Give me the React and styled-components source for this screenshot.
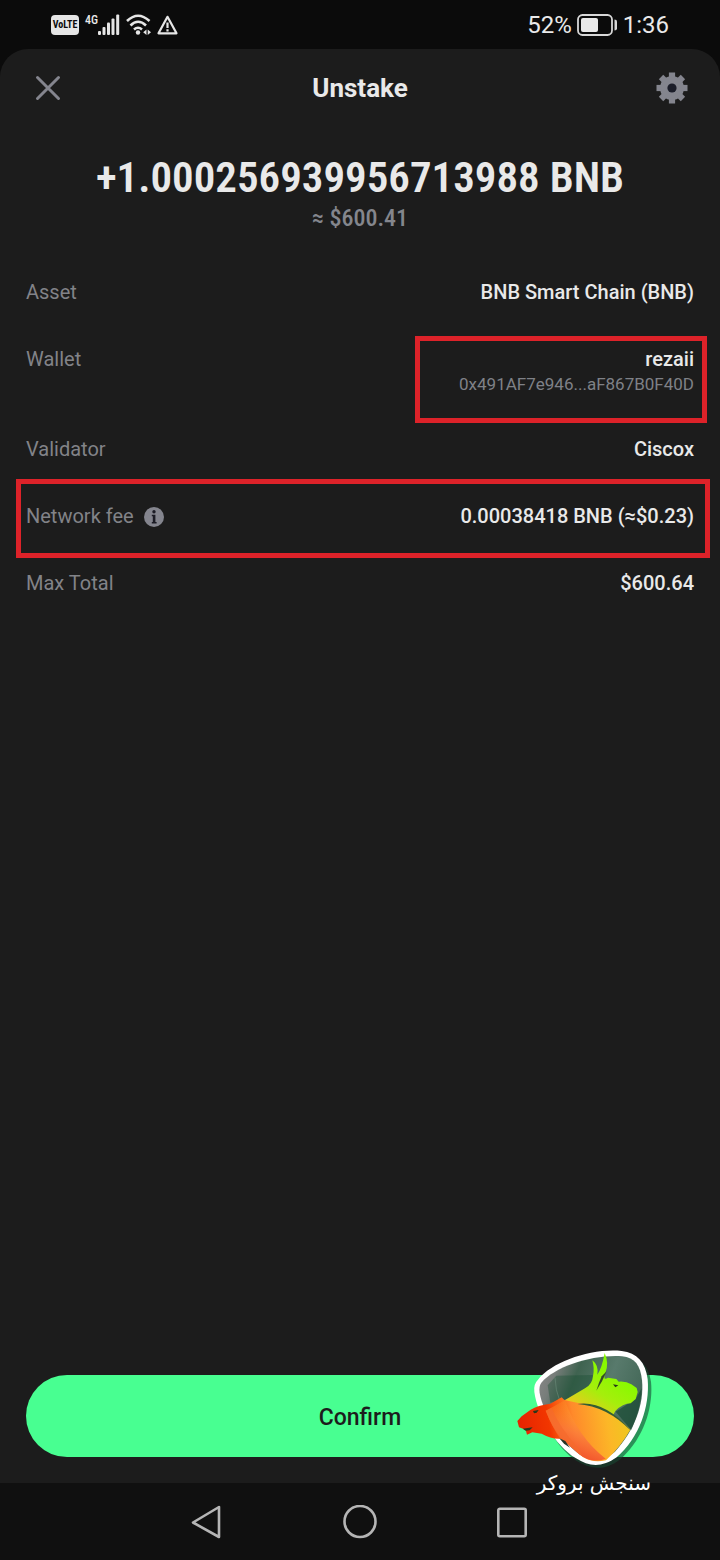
import React from "react";
import styled, { createGlobalStyle } from "styled-components";

const GlobalStyle = createGlobalStyle`
  * { box-sizing: border-box; }
  html { background: #0b0b0b; }
  body { margin: 0; font-family: Roboto, "Liberation Sans", sans-serif; color: #e9e9e9; }
`;

const narrow = `"Liberation Sans Narrow", "Roboto Condensed", Roboto, sans-serif`;

const Screen = styled.div`
  display: flex;
  flex-direction: column;
  min-height: 100vh;
  background: #0b0b0b;
`;

const StatusBar = styled.div`
  display: flex;
  align-items: center;
  justify-content: space-between;
  height: 49px;
  padding: 0 51px;
`;

const StatusGroup = styled.div`
  display: flex;
  align-items: center;
  gap: ${(p) => p.$gap}px;
`;

const VolteBadge = styled.span`
  width: 28px;
  height: 20px;
  border-radius: 4px;
  background: #e6e6e6;
  color: #0b0b0b;
  font: 700 10px/20px ${narrow};
  text-align: center;
`;

const SignalGroup = styled.span`
  display: flex;
  align-items: center;
`;

const NetworkType = styled.span`
  align-self: flex-start;
  font: 500 12px/12px ${narrow};
`;

const StatusText = styled.span`
  font-size: 24px;
  line-height: 28px;
`;

const Sheet = styled.main`
  position: relative;
  display: flex;
  flex: 1;
  flex-direction: column;
  padding: 0 26px 26px;
  border-radius: 28px 28px 0 0;
  background: #1c1c1c;
`;

const Header = styled.header`
  display: flex;
  align-items: center;
  justify-content: space-between;
  height: 78px;
  padding: 0 5px;
`;

const IconButton = styled.button`
  display: grid;
  place-items: center;
  width: 34px;
  height: 34px;
  padding: 0;
  border: 0;
  background: none;
  color: #84858e;
`;

const Title = styled.h1`
  margin: 0;
  font: 700 26px/32px Roboto, sans-serif;
`;

const Summary = styled.section`
  display: flex;
  flex-direction: column;
  align-items: center;
  gap: 3px;
  padding: 26px 0 27px;
`;

const Amount = styled.div`
  font: 600 43px/48px ${narrow};
  white-space: nowrap;
`;

const FiatAmount = styled.div`
  color: #84868d;
  font: 500 24px/28px ${narrow};
`;

const Details = styled.dl`
  margin: 0;
`;

const Row = styled.div`
  position: relative;
  display: flex;
  align-items: flex-start;
  justify-content: space-between;
  padding: 20px 0;
  font-size: 20px;
  line-height: 27px;
`;

const Label = styled.dt`
  display: flex;
  align-items: center;
  gap: 10px;
  color: #828388;
`;

const Value = styled.dd`
  margin: 0;
  font-weight: 500;
  text-align: right;
`;

const Address = styled.div`
  color: #7f8187;
  font-size: 17px;
  font-weight: 400;
  line-height: 23px;
`;

const Highlight = styled.span`
  position: absolute;
  border: 5px solid #dd2229;
  pointer-events: none;
`;

const WalletHighlight = styled(Highlight)`
  inset: 10px -13px -7px auto;
  width: 292px;
`;

const FeeHighlight = styled(Highlight)`
  inset: -4px -16px -8px -10px;
`;

const ConfirmButton = styled.button`
  height: 82px;
  margin-top: auto;
  padding: 4px 0 0;
  border: 0;
  border-radius: 41px;
  background: #48ff91;
  color: #1c1c1c;
  font: 500 23px/28px Roboto, sans-serif;
`;

const Watermark = styled.div`
  position: absolute;
  right: 65px;
  bottom: -14px;
  display: flex;
  flex-direction: column;
  width: 140px;
`;

const WatermarkName = styled.span`
  padding-right: 4px;
  color: #fff;
  font: 400 20px/28px "DejaVu Sans", sans-serif;
  white-space: nowrap;
`;

const NavBar = styled.nav`
  display: flex;
  align-items: center;
  justify-content: center;
  gap: 118px;
  height: 77px;
  background: #101010;
`;

const NavButton = styled(IconButton)`
  color: #b5b5b5;
`;

const SignalIcon = () => (
  <svg width="22" height="22" viewBox="0 0 22 22" fill="#e6e6e6" aria-hidden="true">
    <rect x="0" y="17" width="3" height="4" rx="1" />
    <rect x="4.5" y="13" width="3" height="8" rx="1" />
    <rect x="9" y="8.5" width="3" height="12.5" rx="1" />
    <rect x="13.5" y="4.5" width="3" height="16.5" rx="1" />
    <rect x="18.2" y="0.5" width="3" height="20.5" rx="1" />
  </svg>
);

const WifiIcon = () => (
  <svg width="25" height="22" viewBox="0 0 25 22" fill="none" stroke="#e6e6e6" strokeWidth="2.6" aria-hidden="true">
    <path d="M1 7Q12 -3.5 23.5 7M4.5 11.5Q12 4 20 11.5M8 15.500Q12 12 16 15.500" />
    <circle cx="12" cy="18.5" r="2.2" fill="#e6e6e6" stroke="none" />
    <path d="M20.500 15.500v5.500l-3.300-2.700zM21.700 15.500v5.500l3.300-2.700z" fill="#e6e6e6" stroke="none" />
  </svg>
);

const WarningIcon = () => (
  <svg width="21" height="20" viewBox="0 0 21 20" fill="none" stroke="#e6e6e6" strokeWidth="2.2" strokeLinejoin="round" aria-hidden="true">
    <path d="M10.500 1.800L19.500 18.300H1.500z" />
    <path d="M10.500 7.500v5.500M10.500 14.200v2.200" />
  </svg>
);

const BatteryIcon = () => (
  <svg width="41" height="22" viewBox="0 0 41 22" aria-hidden="true">
    <rect x="1" y="1" width="34" height="20" rx="4.5" fill="none" stroke="#d8d8d8" strokeWidth="1.8" />
    <rect x="4" y="4" width="17" height="14" rx="2" fill="#e9e9e9" />
    <path d="M37.500 5.500q2.500 0 2.500 2v7q0 2-2.500 2z" fill="#d8d8d8" />
  </svg>
);

const CloseIcon = () => (
  <svg width="26" height="26" viewBox="0 0 26 26" stroke="currentColor" strokeWidth="3" strokeLinecap="round" aria-hidden="true">
    <path d="M2.500 2.500l21 21M23.500 2.500l-21 21" />
  </svg>
);

const GearIcon = () => (
  <svg width="32" height="32" viewBox="-16 -16 32 32" fill="currentColor" aria-hidden="true">
    {[0, 45, 90, 135].map((angle) => (
      <rect key={angle} x="-3.1" y="-15.500" width="6.200" height="31" transform={`rotate(${angle})`} />
    ))}
    <circle r="12" />
    <circle r="4.6" fill="#1b1d29" />
  </svg>
);

const InfoIcon = () => (
  <svg width="20" height="20" viewBox="0 0 20 20" fill="none" aria-hidden="true">
    <circle cx="10" cy="10" r="10" fill="#84858e" />
    <circle cx="10" cy="4.800" r="1.700" fill="#1c1c25" />
    <path d="M7.800 7.800h3.600v7.200h1.200v1.500H7.800v-1.500h1V9.300h-1z" fill="#1c1c25" />
  </svg>
);

const ShieldLogo = () => (
  <svg width="140" height="122" viewBox="45 36 420 366" aria-hidden="true">
    <defs>
      <linearGradient id="glass" x1="0" y1="0.2" x2="1" y2="0.6">
        <stop offset="0" stopColor="#858585" />
        <stop offset="0.12" stopColor="#777d7a" />
        <stop offset="0.3" stopColor="#3f6350" />
        <stop offset="0.6" stopColor="#587a6c" />
        <stop offset="1" stopColor="#3e6352" />
      </linearGradient>
      <linearGradient id="bull" gradientUnits="userSpaceOnUse" x1="365" y1="130" x2="220" y2="350">
        <stop offset="0" stopColor="#88fa00" />
        <stop offset="0.28" stopColor="#a6ee0c" />
        <stop offset="0.6" stopColor="#f5c322" />
        <stop offset="1" stopColor="#fa582c" />
      </linearGradient>
      <linearGradient id="body" gradientUnits="userSpaceOnUse" x1="60" y1="290" x2="385" y2="235">
        <stop offset="0" stopColor="#e62300" />
        <stop offset="0.27" stopColor="#f23600" />
        <stop offset="0.5" stopColor="#ff8a2b" />
        <stop offset="0.8" stopColor="#fcb727" />
        <stop offset="1" stopColor="#eec81f" />
      </linearGradient>
      <linearGradient id="chest" gradientUnits="userSpaceOnUse" x1="225" y1="375" x2="285" y2="215">
        <stop offset="0" stopColor="#f04a2a" />
        <stop offset="0.45" stopColor="#fb7c3c" stopOpacity="0.8" />
        <stop offset="1" stopColor="#ffb52c" stopOpacity="0" />
      </linearGradient>
    </defs>
    <path d="M114 137C157 83 274 44 365 52C411 57 441 86 448 136C456 218 422 312 354 370C308 405 267 399 225 374C163 334 115 244 105 174Q102 150 114 137Z" fill="#174832" opacity="0.6" transform="translate(5 4)" />
    <path d="M114 134C157 80 274 39 365 48C411 53 437 82 443 133C450 215 418 309 350 367C305 399 267 395 228 370C163 330 113 240 103 171Q100 147 114 134Z" fill="#fff" />
    <path d="M124 143C165 95 278 58 366 64C405 68 421 91 426 136C433 207 404 286 345 350C305 382 269 379 237 357C181 316 130 235 119 174Q116 154 124 143Z" fill="url(#glass)" />
    <path d="M143 151L169 122L278 120L285 151L221 186L151 203Z" fill="#194e32" opacity="0.4" />
    <path d="M347 230L407 192L425 160Q423 220 394 285Z" fill="#12462f" opacity="0.6" />
    <path d="M165 128Q166 165 180 200" fill="none" stroke="#729180" strokeWidth="3" opacity="0.5" />
    <path d="M185 201L255 160Q277 148 279 123Q284 100 277 76Q297 91 292 119Q306 99 314 54Q328 85 316 114Q308 139 324 128L349 132L356 140Q378 138 394 148L410 159L413 171L407 192L392 205Q369 205 346 228L330 260L240 240Z" fill="url(#bull)" />
    <path d="M52 258L65 244L92 224Q113 211 151 206L185 187L193 195L235 204Q318 207 391 284Q362 335 318 376Q280 385 250 367L207 330L181 311Q155 313 125 296L97 292L81 299L77 284L57 277Z" fill="url(#body)" />
    <path d="M137 227Q157 278 185 312L239 359Q277 387 317 371Q234 308 195 196Z" fill="url(#chest)" />
    <path d="M137 227Q157 278 181 311L207 330L250 367L235 340Q177 275 155 219Z" fill="#f56b2c" opacity="0.7" />
    <path d="M232 207Q315 195 393 288Q322 214 232 207Z" fill="#345d34" />
    <path d="M320 109Q309 137 289 167Q296 144 305 124Z" fill="#344c24" />
    <path d="M339 148L355 151L346 157ZM99 228L116 225L110 233L102 235ZM68 281L98 277L89 286L77 287Z" fill="#27371b" />
    <path d="M178 310L196 318L210 338L192 326Z" fill="#243626" />
  </svg>
);

const BackIcon = () => (
  <svg width="34" height="34" viewBox="0 0 34 34" fill="none" stroke="currentColor" strokeWidth="2.600" strokeLinejoin="round" aria-hidden="true">
    <path d="M28 2V32L2 17.500z" />
  </svg>
);

const HomeIcon = () => (
  <svg width="34" height="34" viewBox="0 0 34 34" fill="none" stroke="currentColor" strokeWidth="2.600" aria-hidden="true">
    <circle cx="17" cy="16.500" r="15.500" />
  </svg>
);

const RecentsIcon = () => (
  <svg width="30" height="32" viewBox="0 0 30 32" fill="none" stroke="currentColor" strokeWidth="2.600" aria-hidden="true">
    <rect x="1.300" y="2.800" width="27.400" height="27.400" rx="1.500" />
  </svg>
);

export default function App() {
  return (
    <Screen>
      <GlobalStyle />
      <StatusBar>
        <StatusGroup $gap={6}>
          <VolteBadge>VoLTE</VolteBadge>
          <SignalGroup>
            <NetworkType>4G</NetworkType>
            <SignalIcon />
          </SignalGroup>
          <WifiIcon />
          <WarningIcon />
        </StatusGroup>
        <StatusGroup $gap={5}>
          <StatusText>52%</StatusText>
          <BatteryIcon />
          <StatusText>1:36</StatusText>
        </StatusGroup>
      </StatusBar>

      <Sheet>
        <Header>
          <IconButton type="button" aria-label="Close"><CloseIcon /></IconButton>
          <Title>Unstake</Title>
          <IconButton type="button" aria-label="Settings"><GearIcon /></IconButton>
        </Header>

        <Summary>
          <Amount>+1.000256939956713988 BNB</Amount>
          <FiatAmount>≈ $600.41</FiatAmount>
        </Summary>

        <Details>
          <Row>
            <Label>Asset</Label>
            <Value>BNB Smart Chain (BNB)</Value>
          </Row>
          <Row>
            <Label>Wallet</Label>
            <Value>
              rezaii
              <Address>0x491AF7e946...aF867B0F40D</Address>
              <WalletHighlight />
            </Value>
          </Row>
          <Row>
            <Label>Validator</Label>
            <Value>Ciscox</Value>
          </Row>
          <Row>
            <Label>Network fee <InfoIcon /></Label>
            <Value>
              0.00038418 BNB (≈$0.23)
              <FeeHighlight />
            </Value>
          </Row>
          <Row>
            <Label>Max Total</Label>
            <Value>$600.64</Value>
          </Row>
        </Details>

        <ConfirmButton type="button">Confirm</ConfirmButton>

        <Watermark>
          <ShieldLogo />
          <WatermarkName lang="fa" dir="rtl">سنجش بروکر</WatermarkName>
        </Watermark>
      </Sheet>

      <NavBar>
        <NavButton type="button" aria-label="Back"><BackIcon /></NavButton>
        <NavButton type="button" aria-label="Home"><HomeIcon /></NavButton>
        <NavButton type="button" aria-label="Recent apps"><RecentsIcon /></NavButton>
      </NavBar>
    </Screen>
  );
}
